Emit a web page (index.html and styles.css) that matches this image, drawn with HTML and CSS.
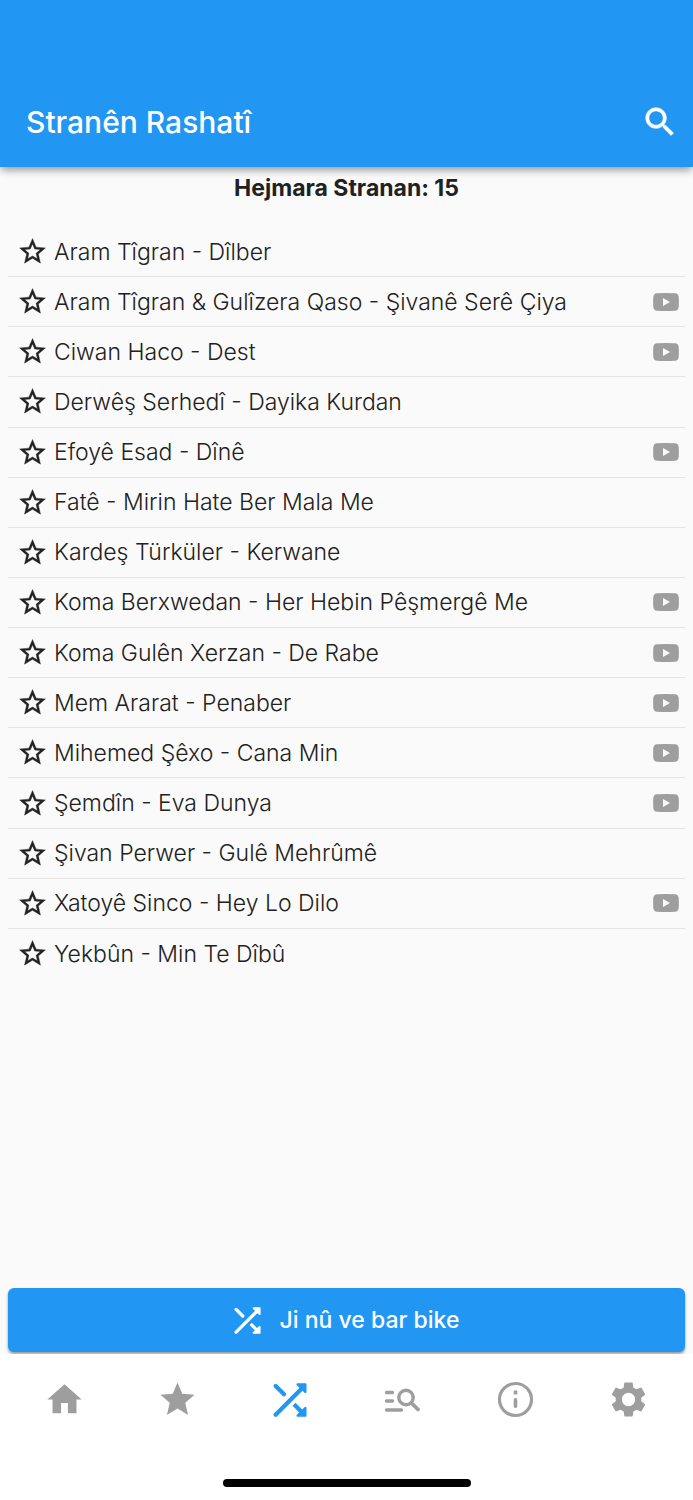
FILE: index.html
```html
<!DOCTYPE html>
<html lang="ku">
<head>
<meta charset="utf-8">
<meta name="viewport" content="width=device-width, initial-scale=1">
<title>Stranên Rashatî</title>
<link rel="stylesheet" href="styles.css">
</head>
<body>
<svg class="sprite" aria-hidden="true">
  <symbol id="star-outline" viewBox="0 0 24 24"><path stroke="currentColor" stroke-width=".3" d="M22 9.24l-7.19-.62L12 2 9.19 8.63 2 9.24l5.46 4.73L5.82 21 12 17.27 18.18 21l-1.63-7.03L22 9.24zM12 15.4l-3.76 2.27 1-4.28-3.32-2.88 4.38-.38L12 6.1l1.71 4.04 4.38.38-3.32 2.88 1 4.28L12 15.4z"/></symbol>
  <symbol id="video" viewBox="0 0 26 18"><path fill-rule="evenodd" d="M4 .3Q13-.1 22 .3 25.300.5 25.700 4 26 9 25.700 14 25.300 17.500 22 17.700 13 18.100 4 17.700.7 17.500.3 14 0 9 .3 4 .7.500 4 .3zM10 5v8l7-4z"/></symbol>
  <symbol id="shuffle" viewBox="0 0 100 102">
    <g fill="none" stroke="currentColor" stroke-width="12.500"><path stroke-linecap="round" d="M7 9l25 25M7 95l79-79"/><path d="M62 64l26 26"/></g>
    <path stroke="currentColor" stroke-width="7" stroke-linejoin="round" d="M73 4h23v23zM73 98h23V75z"/>
  </symbol>
</svg>
<header class="app-bar">
  <h1 class="app-title">Stranên Rashatî</h1>
  <button class="icon-button" type="button" aria-label="Lêgerîn">
    <svg class="search-icon" viewBox="0 0 24 24"><path stroke="currentColor" stroke-width=".4" d="M15.5 14h-.79l-.28-.27C15.410 12.590 16 11.110 16 9.500 16 5.910 13.090 3 9.500 3S3 5.910 3 9.500 5.910 16 9.500 16c1.610 0 3.090-.59 4.230-1.570l.27.28v.79l5 4.990L20.490 19l-4.990-5zm-6 0C7.010 14 5 11.990 5 9.500S7.010 5 9.500 5 14 7.010 14 9.500 11.990 14 9.500 14z"/></svg>
  </button>
</header>
<main class="content">
  <h2 class="count">Hejmara Stranan: 15</h2>
  <ul class="songs">
    <li class="song"><svg class="star"><use href="#star-outline"/></svg><span class="name">Aram Tîgran - Dîlber</span></li>
    <li class="song"><svg class="star"><use href="#star-outline"/></svg><span class="name">Aram Tîgran &amp; Gulîzera Qaso - Şivanê Serê Çiya</span><svg class="video"><use href="#video"/></svg></li>
    <li class="song"><svg class="star"><use href="#star-outline"/></svg><span class="name">Ciwan Haco - Dest</span><svg class="video"><use href="#video"/></svg></li>
    <li class="song"><svg class="star"><use href="#star-outline"/></svg><span class="name">Derwêş Serhedî - Dayika Kurdan</span></li>
    <li class="song"><svg class="star"><use href="#star-outline"/></svg><span class="name">Efoyê Esad - Dînê</span><svg class="video"><use href="#video"/></svg></li>
    <li class="song"><svg class="star"><use href="#star-outline"/></svg><span class="name">Fatê - Mirin Hate Ber Mala Me</span></li>
    <li class="song"><svg class="star"><use href="#star-outline"/></svg><span class="name">Kardeş Türküler - Kerwane</span></li>
    <li class="song"><svg class="star"><use href="#star-outline"/></svg><span class="name">Koma Berxwedan - Her Hebin Pêşmergê Me</span><svg class="video"><use href="#video"/></svg></li>
    <li class="song"><svg class="star"><use href="#star-outline"/></svg><span class="name">Koma Gulên Xerzan - De Rabe</span><svg class="video"><use href="#video"/></svg></li>
    <li class="song"><svg class="star"><use href="#star-outline"/></svg><span class="name">Mem Ararat - Penaber</span><svg class="video"><use href="#video"/></svg></li>
    <li class="song"><svg class="star"><use href="#star-outline"/></svg><span class="name">Mihemed Şêxo - Cana Min</span><svg class="video"><use href="#video"/></svg></li>
    <li class="song"><svg class="star"><use href="#star-outline"/></svg><span class="name">Şemdîn - Eva Dunya</span><svg class="video"><use href="#video"/></svg></li>
    <li class="song"><svg class="star"><use href="#star-outline"/></svg><span class="name">Şivan Perwer - Gulê Mehrûmê</span></li>
    <li class="song"><svg class="star"><use href="#star-outline"/></svg><span class="name">Xatoyê Sinco - Hey Lo Dilo</span><svg class="video"><use href="#video"/></svg></li>
    <li class="song"><svg class="star"><use href="#star-outline"/></svg><span class="name">Yekbûn - Min Te Dîbû</span></li>
  </ul>
  <button class="reload" type="button"><svg class="reload-icon"><use href="#shuffle"/></svg>Ji nû ve bar bike</button>
</main>
<footer class="bottom">
  <nav class="tabs">
    <a class="tab" href="#home" aria-label="Serûpel"><svg class="tab-icon" viewBox="0 0 24 24"><path d="M10 20v-6h4v6h5v-8h3L12 3 2 12h3v8z"/></svg></a>
    <a class="tab" href="#favourites" aria-label="Bijare"><svg class="tab-icon" viewBox="0 0 24 24"><path d="M12 17.270L18.180 21l-1.640-7.030L22 9.240l-7.190-.61L12 2 9.190 8.630 2 9.240l5.460 4.730L5.820 21z"/></svg></a>
    <a class="tab tab-active" href="#random" aria-label="Rashatî" aria-current="page"><svg class="tab-icon tab-icon-small"><use href="#shuffle"/></svg></a>
    <a class="tab" href="#search" aria-label="Lêgerîn"><svg class="tab-icon" viewBox="0 0 41 41"><g fill="none" stroke="currentColor" stroke-width="3.400" stroke-linecap="round"><path d="M4.500 13.500h6M4.500 22h6M4.500 31h15"/><path stroke-width="3.800" d="M29.500 24l6.500 6.500"/><circle cx="24" cy="18.500" r="7.200"/></g></svg></a>
    <a class="tab" href="#info" aria-label="Agahî"><svg class="tab-icon" viewBox="0 0 41 41"><g fill="none" stroke="currentColor" stroke-width="3.200"><circle cx="20.500" cy="20.500" r="16"/><path stroke-width="3.600" d="M20.500 11.500v4"/><path stroke-width="3.600" stroke-linecap="round" d="M20.500 20.800v6.500"/></g></svg></a>
    <a class="tab" href="#settings" aria-label="Mîheng"><svg class="tab-icon" viewBox="0 0 24 24"><path d="M19.500 12c0-.34-.03-.66-.07-.98l2.110-1.650c.19-.15.240-.42.120-.64l-2-3.460c-.12-.22-.39-.3-.61-.22l-2.490 1c-.52-.4-1.080-.73-1.690-.98l-.38-2.650C14.460 2.180 14.250 2 14 2h-4c-.25 0-.46.18-.49.42l-.38 2.650c-.61.25-1.170.59-1.690.98l-2.490-1c-.23-.09-.49 0-.61.22l-2 3.460c-.13.220-.07.490.12.640l2.110 1.650c-.04.32-.07.650-.07.98s.03.660.07.980l-2.110 1.650c-.19.150-.240.420-.12.640l2 3.460c.12.220.39.300.61.220l2.490-1c.52.400 1.080.730 1.690.980l.38 2.650c.03.240.24.420.49.420h4c.25 0 .46-.18.490-.42l.38-2.650c.61-.25 1.170-.59 1.690-.98l2.490 1c.23.090.49 0 .61-.22l2-3.460c.12-.22.070-.49-.12-.64l-2.110-1.650c.04-.32.070-.64.070-.98zM12 15.900a3.900 3.900 0 1 1 0-7.800 3.900 3.900 0 0 1 0 7.800z"/></svg></a>
  </nav>
  <div class="home-indicator"></div>
</footer>
</body>
</html>
```
FILE: styles.css
```css
* {
  box-sizing: border-box;
}

body {
  display: flex;
  flex-direction: column;
  min-height: 100vh;
  margin: 0;
  background: #fafafa;
  color: #212121;
  font-family: Inter, "Noto Sans", sans-serif;
  font-size: 23px;
  line-height: 28px;
}

svg {
  display: block;
  flex: none;
  fill: currentColor;
}

button {
  border: 0;
  font: inherit;
  cursor: pointer;
}

.sprite {
  position: absolute;
  width: 0;
  height: 0;
}

.app-bar {
  display: flex;
  align-items: center;
  justify-content: space-between;
  padding: 77px 14px 0 26px;
  background: #2196f3;
  color: #fff;
  box-shadow: 0 4px 8px -1px rgba(0, 0, 0, 0.4);
}

.app-title {
  margin: 0;
  font-size: 30px;
  font-weight: 500;
  line-height: 90px;
}

.icon-button {
  padding: 0;
  background: none;
  color: inherit;
}

.search-icon {
  width: 38px;
  height: 38px;
}

.content {
  display: flex;
  flex: 1;
  flex-direction: column;
  padding: 7px 8px 2px;
}

.count {
  margin: 0 0 25px;
  font-size: 23px;
  font-weight: 700;
  text-align: center;
}

.songs {
  display: grid;
  grid-auto-rows: 1fr;
  min-height: 752px;
  margin: 0;
  padding: 0;
  list-style: none;
}

.song {
  display: flex;
  align-items: center;
  gap: 6px;
  padding: 0 6px 0 9px;
  border-bottom: 1px solid #e4e4e4;
}

.song:last-child {
  border-bottom: 0;
}

.star {
  width: 31px;
  height: 31px;
}

.name {
  flex: 1;
  font-weight: 300;
}

.video {
  width: 26px;
  height: 18px;
  color: #9e9e9e;
}

.reload {
  display: flex;
  align-items: center;
  justify-content: center;
  gap: 19px;
  margin-top: auto;
  padding: 18px;
  border-radius: 6px;
  background: #2196f3;
  color: #fff;
  font-weight: 500;
  box-shadow: 0 2px 3px rgba(0, 0, 0, 0.4);
}

.reload-icon {
  width: 27px;
  height: 27px;
}

.bottom {
  position: relative;
  display: flex;
  flex-direction: column;
  align-items: center;
  padding-bottom: 13px;
  background: #fff;
}

.tabs {
  display: flex;
  align-self: stretch;
  padding: 0 8px;
}

.tab {
  display: flex;
  flex: 1;
  align-items: center;
  justify-content: center;
  height: 91px;
  color: #9e9e9e;
}

.tab-active {
  color: #2196f3;
}

.tab-icon {
  width: 41px;
  height: 41px;
}

.tab-icon-small {
  width: 34px;
  height: 34px;
}

.home-indicator {
  width: 248px;
  height: 8px;
  margin-top: 34px;
  border-radius: 4px;
  background: #000;
}
```
